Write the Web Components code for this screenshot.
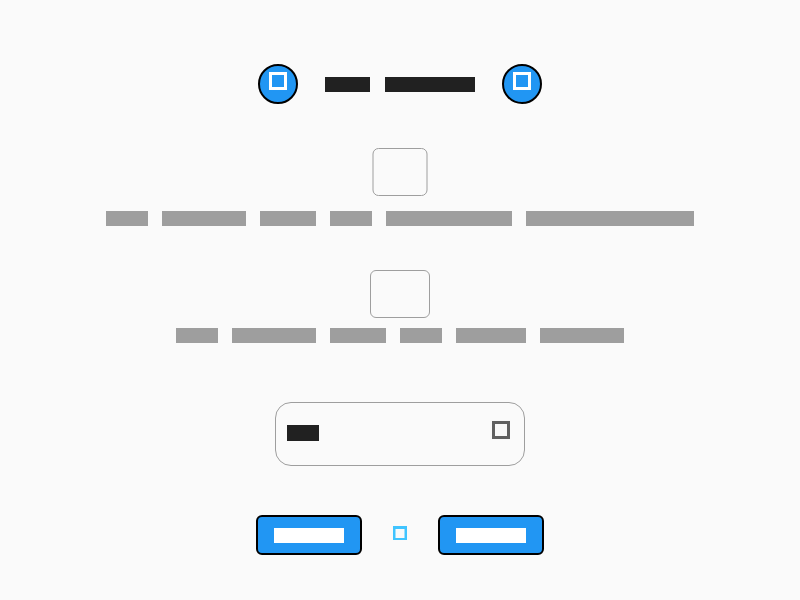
<!DOCTYPE html>
<html lang="en">
<head>
<meta charset="utf-8">
<title>Wireframe</title>
<style>
  html, body { margin: 0; height: 100%; background: #fafafa; font-family: Roboto, sans-serif; }
</style>
</head>
<body>
<wire-page></wire-page>
<script>
  class WireElement extends HTMLElement {
    connectedCallback() {
      if (this.shadowRoot) return;
      this.attachShadow({ mode: 'open' }).innerHTML = this.view();
    }
    num(name, fallback) { return Number(this.getAttribute(name) || fallback); }
  }

  // A row of solid word blocks; "words" lists their widths.
  customElements.define('word-row', class extends WireElement {
    view() {
      const words = this.getAttribute('words').split(' ').map(w => `<i style="width:${w}px"></i>`).join('');
      return `<style>
        :host { display: flex; justify-content: center; gap: ${this.num('gap', 14)}px; }
        i { height: ${this.num('height', 15)}px; background: var(--ink, #9e9e9e); }
      </style>${words}`;
    }
  });

  // A square glyph outline.
  customElements.define('square-glyph', class extends WireElement {
    view() {
      return `<style>
        :host { display: block; flex: none; box-sizing: border-box; width: 18px; height: 18px; border: 3px solid var(--ink, #fff); }
      </style>`;
    }
  });

  customElements.define('small-glyph', class extends WireElement {
    view() {
      return `<style>:host, svg { display: block; width: 14px; height: 14px; }</style>
        <svg viewBox="0 0 14 14"><path fill="#40c4ff" fill-rule="evenodd" d="M0 0H14V14H0ZM2.5 3V12H11.5V3Z"/></svg>`;
    }
  });

  customElements.define('round-button', class extends WireElement {
    view() {
      return `<style>
        :host { display: flex; justify-content: center; box-sizing: border-box; width: 40px; height: 40px; padding-top: 6px;
          border: 2px solid #000; border-radius: 50%; background: #2196f3; }
      </style><slot></slot>`;
    }
  });

  customElements.define('outline-box', class extends WireElement {
    view() {
      const w = this.num('width', 60), frame = Math.ceil(w / 2) * 2, x = (frame - w) / 2;
      return `<style>:host, svg { display: block; width: ${frame}px; height: 48px; }</style>
        <svg viewBox="0 0 ${frame} 48"><rect x="${x + 0.5}" y="0.5" width="${w - 1}" height="47" rx="5.5" fill="none" stroke="#9e9e9e"/></svg>`;
    }
  });

  customElements.define('select-field', class extends WireElement {
    view() {
      return `<style>
        :host { display: flex; justify-content: space-between; align-items: flex-start; box-sizing: border-box;
          width: 250px; height: 64px; padding: 18px 14px 0 11px; border: 1px solid #9e9e9e; border-radius: 16px; }
        word-row { --ink: #212121; margin-top: 4px; }
        square-glyph { --ink: #616161; }
      </style><word-row words="32" height="16"></word-row><square-glyph></square-glyph>`;
    }
  });

  customElements.define('block-button', class extends WireElement {
    view() {
      return `<style>
        :host { display: block; box-sizing: border-box; width: 106px; height: 40px; padding-top: 11px;
          border: 2px solid #000; border-radius: 6px; background: #2196f3; }
        word-row { --ink: #fff; }
      </style><word-row words="70"></word-row>`;
    }
  });

  customElements.define('wire-page', class extends WireElement {
    view() {
      return `<style>
        :host { display: flex; flex-direction: column; align-items: center; box-sizing: border-box; height: 100%; padding-top: 64px; }
        header { display: flex; gap: 27px; }
        header word-row { --ink: #212121; margin-top: 13px; }
        section { display: flex; flex-direction: column; align-items: center; }
        .first { margin-top: 44px; gap: 15px; }
        .second { margin-top: 44px; gap: 10px; }
        select-field { margin-top: 59px; }
        footer { display: flex; gap: 31px; margin-top: 49px; }
        small-glyph { margin-top: 11px; }
      </style>
      <header>
        <round-button><square-glyph></square-glyph></round-button>
        <word-row words="45 90" gap="15"></word-row>
        <round-button><square-glyph></square-glyph></round-button>
      </header>
      <section class="first">
        <outline-box width="55"></outline-box>
        <word-row words="42 84 56 42 126 168"></word-row>
      </section>
      <section class="second">
        <outline-box width="60"></outline-box>
        <word-row words="42 84 56 42 70 84"></word-row>
      </section>
      <select-field></select-field>
      <footer>
        <block-button></block-button>
        <small-glyph></small-glyph>
        <block-button></block-button>
      </footer>`;
    }
  });
</script>
</body>
</html>
